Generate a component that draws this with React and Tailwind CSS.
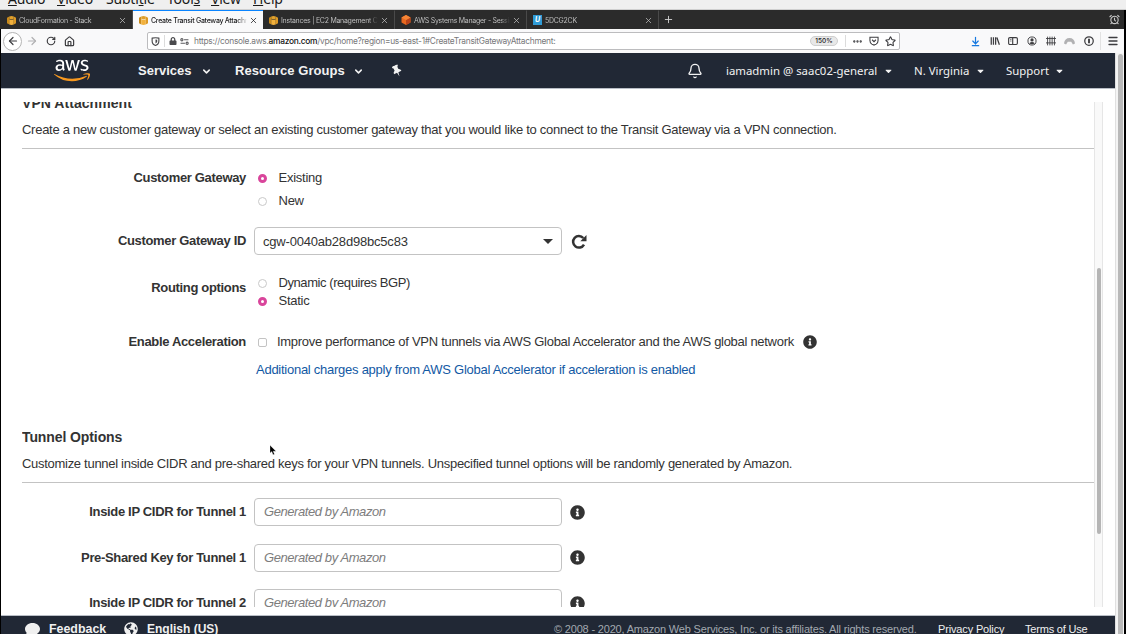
import React from 'react';
import {
  ArrowLeft, ArrowRight, RotateCw, House, X, Plus, ChevronDown, Bell, Star, Ellipsis, Menu,
  AlarmClock, ArrowDownToLine,
} from 'lucide-react';
import {
  FaAws, FaInfoCircle, FaComment, FaGlobeAmericas, FaLock, FaCaretDown,
} from 'react-icons/fa';

const MENUS = [
  ['', 'A', 'udio', 'ml-[8px] w-[49px]'],
  ['', 'V', 'ideo', 'w-[49px]'],
  ['Subti', 't', 'le', 'w-[61px]'],
  ['Tool', 's', '', 'w-[44px]'],
  ['', 'V', 'iew', 'w-[42px]'],
  ['', 'H', 'elp', 'w-[40px]'],
];

function MenuBar() {
  return (
    <div className="h-[10px] shrink-0 overflow-hidden border-b border-[#cfcfcf] bg-[#efefef] font-['Noto_Sans',sans-serif] text-[14px] leading-[20px] text-[#1a1a1a]">
      <div className="-mt-[11px] flex whitespace-nowrap tracking-[-0.2px]">
        {MENUS.map(([a, u, b, cls]) => (
          <span key={a + u + b} className={cls}>
            {a}
            <span className="underline decoration-1 underline-offset-1">{u}</span>
            {b}
          </span>
        ))}
      </div>
    </div>
  );
}

function Cube({ red }) {
  return red ? (
    <svg viewBox="0 0 20 20" className="h-[10px] w-[10px] shrink-0">
      <path d="M10 0l9 5v10l-9 5-9-5V5z" fill="#e8681f" />
      <path d="M10 10l9-5v10l-9 5z" fill="#b8431a" />
      <path d="M10 0l9 5-9 5-9-5z" fill="#f58536" />
    </svg>
  ) : (
    <svg viewBox="0 0 20 20" className="h-[9px] w-[9px] shrink-0">
      <path d="M0 4l5-3v18l-5-3z" fill="#c98a1b" />
      <path d="M5 1l5-1 5 1v5l-5 2-5-2z" fill="#e0a02b" />
      <path d="M5 7l5 2v11l-5-1zM15 7l-5 2v11l5-1z" fill="#f2b13d" />
      <path d="M20 4l-5-3v18l5-3z" fill="#dd9a26" />
    </svg>
  );
}

function Tab({ icon, title, active, width }) {
  return (
    <div
      className={`flex ${width} items-center border-t pl-[6px] pr-[5px] ${
        active ? 'border-t-[#0a84ff] bg-[#f9f9fa] font-medium text-[#1b1b1d]' : 'border-r border-t-[#2b2b2b] border-r-[#4a4a4a] bg-[#2b2b2b] text-[#bdbdbd]'
      }`}
    >
      {icon}
      <span className="ml-[3px] min-w-0 flex-1 overflow-hidden whitespace-nowrap pt-px text-[7px] leading-[12px] tracking-[-0.27px] [mask-image:linear-gradient(to_right,black_90%,transparent)]">
        {title}
      </span>
      <X className="ml-[2px] h-[9px] w-[9px] shrink-0" strokeWidth={2} />
    </div>
  );
}

function TabStrip() {
  return (
    <div className="flex h-[19px] shrink-0 bg-[#2b2b2b] pl-px font-['Inter',sans-serif]">
      <Tab width="w-[132px]" icon={<Cube />} title="CloudFormation - Stack" />
      <Tab width="w-[130px]" active icon={<Cube />} title="Create Transit Gateway Attachm" />
      <Tab width="w-[132px]" icon={<Cube />} title="Instances | EC2 Management C" />
      <Tab width="w-[132px]" icon={<Cube red />} title="AWS Systems Manager - Sessio" />
      <Tab
        width="w-[132px]"
        icon={<span className="flex h-[10px] w-[9px] shrink-0 items-center justify-center bg-[#2f9bd6] text-[7px] font-bold italic text-white">U</span>}
        title="5DCG2CK"
      />
      <div className="flex items-center pl-[4px] text-[#d0d0d0]">
        <Plus className="h-[11px] w-[11px]" strokeWidth={2} />
      </div>
      <div className="ml-auto mr-[4px] flex items-center text-[#c8c8c8]">
        <AlarmClock className="h-[11px] w-[11px]" strokeWidth={2.4} />
      </div>
      <div className="w-[2px] bg-black" />
    </div>
  );
}

function ToolBar() {
  return (
    <div className="flex h-[24px] shrink-0 items-center border-x border-x-black border-r-2 bg-[#f9f9fa] font-['Inter',sans-serif] text-[#3d3d40]">
      <div className="ml-[2px] flex h-[19px] w-[19px] shrink-0 items-center justify-center rounded-full border border-[#b5b5b5] bg-white">
        <ArrowLeft className="h-[12px] w-[12px]" strokeWidth={2.4} />
      </div>
      <ArrowRight className="ml-[4px] h-[12px] w-[12px] text-[#b0b0b2]" strokeWidth={2.4} />
      <RotateCw className="ml-[8px] h-[10px] w-[10px]" strokeWidth={2.8} />
      <House className="ml-[8px] h-[11px] w-[11px]" strokeWidth={2.6} />
      <div className="ml-[72px] flex h-[18px] w-[753px] items-center rounded-[2px] border border-[#bcbcbe] bg-white">
        <svg viewBox="0 0 16 16" className="ml-[3px] h-[9px] w-[9px]" fill="none" stroke="#4a4a4d" strokeWidth="2">
          <path d="M2 2q6-1.500 12 0v5q0 6-6 8-6-2-6-8z" />
          <path d="M8 4.500v7q2.500-1 3-4V5z" fill="#4a4a4d" stroke="none" />
        </svg>
        <div className="ml-[4px] h-[12px] w-px bg-[#dcdcdc]" />
        <FaLock className="ml-[4px] h-[8px] w-[8px] text-[#4a4a4d]" />
        <svg viewBox="0 0 20 16" className="ml-[3px] h-[7px] w-[9px]" fill="none" stroke="#5a5a5d" strokeWidth="2.500">
          <circle cx="4" cy="4" r="2.500" />
          <path d="M9 4h10M1 12h10" />
          <circle cx="16" cy="12" r="2.500" />
        </svg>
        <div className="ml-[5px] whitespace-nowrap text-[8.400px] leading-[14px] tracking-[-0.28px] text-[#77777a]">
          https://console.aws.<span className="font-medium text-[#111]">amazon.com</span>/vpc/home?region=us-east-1#CreateTransitGatewayAttachment:
        </div>
        <div className="ml-auto flex h-[10px] w-[28px] items-center justify-center rounded-full border border-[#cfcfcf] bg-[#e8e8e8] pt-px text-[6.500px] font-medium text-[#222]">150%</div>
        <div className="ml-[7px] h-[12px] w-px bg-[#dcdcdc]" />
        <Ellipsis className="ml-[6px] h-[11px] w-[11px]" strokeWidth={3} />
        <svg viewBox="0 0 16 16" className="ml-[6px] h-[10px] w-[10px]" fill="none" stroke="currentColor" strokeWidth="1.700">
          <path d="M1.500 2h13v5q0 4-3 6l-3.500 1.500L4.500 13q-3-2-3-6z" />
          <path d="M5 6l3 3 3-3" />
        </svg>
        <Star className="ml-[6px] mr-[3px] h-[11px] w-[11px]" strokeWidth={2.4} />
      </div>
      <div className="ml-auto flex items-center gap-[8.700px]">
        <ArrowDownToLine className="h-[11px] w-[11px] text-[#1679e0]" strokeWidth={2.6} />
        <svg viewBox="0 0 16 16" className="h-[10px] w-[10px]" stroke="currentColor" strokeWidth="2">
          <path d="M2 2v12M5.500 2v12M9 2v12M11 2.500l4 11.500" />
        </svg>
        <svg viewBox="0 0 16 16" className="h-[10px] w-[10px]" fill="none" stroke="currentColor" strokeWidth="1.800">
          <rect x="1" y="2.500" width="14" height="11" rx="2" />
          <path d="M7.500 2.500v11" />
          <path d="M3.500 5.500h2M3.500 8h2" strokeWidth="1.200" />
        </svg>
        <svg viewBox="0 0 16 16" className="h-[10px] w-[10px]">
          <circle cx="8" cy="8" r="6.500" fill="none" stroke="currentColor" strokeWidth="1.500" />
          <circle cx="8" cy="6.300" r="2.600" fill="currentColor" />
          <path d="M3.500 11.500q4.500-3.500 9 0-4.500 3.500-9 0z" fill="currentColor" />
        </svg>
        <svg viewBox="0 0 16 16" className="h-[10px] w-[10px]" stroke="currentColor" strokeWidth="1.400">
          <path d="M2.500 1v14M6.200 1v14M9.800 1v14M13.500 1v14M0 4h16M0 11h16" />
        </svg>
        <svg viewBox="0 0 16 16" className="h-[11px] w-[11px]" fill="#b1b1b3">
          <path d="M0 11Q1 3 8 3t8 8l-3 1.500-2.500-4H5.500L3 12.500z" />
        </svg>
        <svg viewBox="0 0 16 16" className="h-[10px] w-[10px]" fill="none" stroke="currentColor" strokeWidth="2">
          <circle cx="8" cy="8" r="6.800" />
          <path d="M8 4.500v7" strokeWidth="3" />
        </svg>
      </div>
      <div className="ml-[6px] h-[18px] w-px bg-[#e2e2e2]" />
      <Menu className="ml-[6px] mr-[5px] h-[12px] w-[12px]" strokeWidth={2.6} />
    </div>
  );
}

function AwsHeader() {
  return (
    <div className="flex h-[36px] shrink-0 items-center border-b border-[#b9bec6] bg-[#212835] pt-px text-[#f2f2f2]">
      <svg className="absolute h-0 w-0">
        <defs>
          <linearGradient id="smile" gradientUnits="userSpaceOnUse" x1="0" y1="0" x2="0" y2="512">
            <stop offset="0.6" stopColor="#fff" />
            <stop offset="0.6" stopColor="#f7981f" />
          </linearGradient>
        </defs>
      </svg>
      <FaAws fill="url(#smile)" className="-mt-[2px] ml-[53px] h-[29px] w-[36px]" />
      <span className="ml-[48px] w-[54px] whitespace-nowrap text-[13px] font-bold">Services</span>
      <ChevronDown className="ml-[9px] mt-px h-[11px] w-[11px]" strokeWidth={3.4} />
      <span className="ml-[23px] w-[110px] whitespace-nowrap text-[13px] font-bold tracking-[0.05px]">Resource Groups</span>
      <ChevronDown className="ml-[8px] mt-px h-[11px] w-[11px]" strokeWidth={3.4} />
      <svg viewBox="0 0 16 16" className="ml-[27px] h-[12px] w-[12px] -rotate-[25deg]" fill="currentColor">
        <path d="M4 0h8v2.200L10.800 3v3.500q2.700 1 2.700 3.700H9L8 16 7 10.200H2.500q0-2.700 2.700-3.700V3L4 2.200z" />
      </svg>
      <Bell className="ml-[284px] h-[16px] w-[16px]" strokeWidth={2} />
      <div className="ml-[23px] flex items-center whitespace-nowrap font-['Noto_Sans',sans-serif] text-[11.400px]">
        <span className="w-[152px]">iamadmin @ saac02-general</span>
        <FaCaretDown className="ml-[6px] h-[10px] w-[9px]" />
        <span className="ml-[21px] w-[56px]">N. Virginia</span>
        <FaCaretDown className="ml-[6px] h-[10px] w-[9px]" />
        <span className="ml-[21px] w-[43px]">Support</span>
        <FaCaretDown className="ml-[6px] h-[10px] w-[9px]" />
      </div>
    </div>
  );
}

function Row({ label, className = '', children }) {
  return (
    <div className={`flex items-center ${className}`}>
      <div className="w-[224px] shrink-0 whitespace-nowrap text-right font-bold tracking-[-0.33px]">{label}</div>
      {children}
    </div>
  );
}

function Radio({ on, label, className = '', labelClass = 'tracking-[-0.25px]' }) {
  return (
    <div className={`flex items-center pl-[12px] ${className}`}>
      <span className={`h-[9px] w-[9px] shrink-0 rounded-full ${on ? 'border-[3px] border-[#d9459b] bg-white' : 'border border-[#c9c9c9] bg-white'}`} />
      <span className={`ml-[11.5px] whitespace-nowrap ${labelClass}`}>{label}</span>
    </div>
  );
}

function Section({ title, text, className, titleClass, textClass }) {
  return (
    <div className={`border-b border-[#c3c3c3] pb-[8px] ${className}`}>
      <h2 className={`text-[14px] font-bold leading-[20px] ${titleClass}`}>{title}</h2>
      <p className={`mt-[7px] whitespace-nowrap ${textClass}`}>{text}</p>
    </div>
  );
}

function TunnelField({ label, className }) {
  return (
    <Row label={label} className={className}>
      <div className="ml-[8px] flex h-[28px] w-[308px] items-center rounded-[4px] border border-[#c3c3c3] pl-[9px] italic tracking-[-0.42px] text-[#7d7d7d]">
        Generated by Amazon
      </div>
      <FaInfoCircle className="ml-[8px] h-[15px] w-[15px] text-[#333]" />
    </Row>
  );
}

function Content() {
  return (
    <div className="flex min-h-0 flex-1 bg-white pb-[8px] pl-[21px] pt-[13px]">
      <div className="w-[1072px] overflow-hidden text-[13px] leading-[20px] text-[#333]">
        <Section
          className="-mt-[9px]"
          titleClass="tracking-[0.05px]"
          textClass="tracking-[-0.27px]"
          title="VPN Attachment"
          text="Create a new customer gateway or select an existing customer gateway that you would like to connect to the Transit Gateway via a VPN connection."
        />
        <div className="flex pt-[19px]">
          <Row label="Customer Gateway" className="h-[20px]" />
          <div>
            <Radio on label="Existing" />
            <Radio label="New" className="mt-[3px]" />
          </div>
        </div>
        <Row label="Customer Gateway ID" className="mt-[16px]">
          <div className="ml-[8px] flex h-[28px] w-[308px] items-center justify-between rounded-[4px] border border-[#c3c3c3] pl-[8px] pr-[8px]">
            <span className="pt-px tracking-[-0.2px]">cgw-0040ab28d98bc5c83</span>
            <span className="h-0 w-0 border-x-[5.500px] border-t-[5.500px] border-x-transparent border-t-[#333]" />
          </div>
          <svg viewBox="0 0 16 16" className="ml-[9px] mt-px h-[16px] w-[16px]">
            <path d="M13 10.600A5.800 5.800 0 1 1 12.300 4" fill="none" stroke="currentColor" strokeWidth="2.500" />
            <path d="M15.500 1v6.200H9.300z" fill="currentColor" />
          </svg>
        </Row>
        <div className="mt-[19px] flex">
          <Row label="Routing options" className="mt-[4px] h-[20px]" />
          <div>
            <Radio label="Dynamic (requires BGP)" className="h-[18px]" labelClass="tracking-[-0.43px]" />
            <Radio on label="Static" className="h-[18px]" />
          </div>
        </div>
        <Row label="Enable Acceleration" className="mt-[22px] h-[20px]">
          <span className="ml-[12px] h-[9px] w-[9px] shrink-0 rounded-[2px] border border-[#c3c3c3]" />
          <span className="ml-[10px] whitespace-nowrap tracking-[-0.29px]">Improve performance of VPN tunnels via AWS Global Accelerator and the AWS global network</span>
          <FaInfoCircle className="ml-[9px] h-[14px] w-[14px]" />
        </Row>
        <div className="mt-[8px] whitespace-nowrap pl-[234px] tracking-[-0.26px] text-[#1259a4]">
          Additional charges apply from AWS Global Accelerator if acceleration is enabled
        </div>
        <Section
          className="mt-[47px]"
          titleClass="tracking-[-0.1px]"
          textClass="tracking-[-0.29px]"
          title="Tunnel Options"
          text="Customize tunnel inside CIDR and pre-shared keys for your VPN tunnels. Unspecified tunnel options will be randomly generated by Amazon."
        />
        <TunnelField label="Inside IP CIDR for Tunnel 1" className="mt-[15px]" />
        <TunnelField label="Pre-Shared Key for Tunnel 1" className="mt-[17.5px]" />
        <TunnelField label="Inside IP CIDR for Tunnel 2" className="mt-[17.5px]" />
      </div>
      <div className="w-[9px] border-x border-[#e6e6e6] bg-[#f9f9f9] pl-[1.5px] pt-[166px]">
        <div className="h-[266px] w-[4.5px] rounded-full bg-[#b5b5b5]" />
      </div>
    </div>
  );
}

function Footer() {
  return (
    <div className="h-[19px] shrink-0 overflow-hidden border-t border-[#b9bec6] bg-[#212835]">
      <div className="flex h-[26px] items-center whitespace-nowrap text-[#f0f0f0]">
        <FaComment className="ml-[24px] h-[15px] w-[15px]" />
        <span className="ml-[9px] w-[58px] text-[12.400px] font-bold">Feedback</span>
        <FaGlobeAmericas className="ml-[17px] h-[14px] w-[14px]" />
        <span className="ml-[9px] w-[71px] text-[12px] font-bold">English (US)</span>
        <span className="ml-[336px] w-[363px] text-[11px] tracking-[-0.18px] text-[#a3a8b0]">© 2008 - 2020, Amazon Web Services, Inc. or its affiliates. All rights reserved.</span>
        <span className="ml-[21px] w-[67px] text-[11px] tracking-[-0.15px]">Privacy Policy</span>
        <span className="ml-[20px] text-[11px] tracking-[-0.2px]">Terms of Use</span>
      </div>
    </div>
  );
}

export default function App() {
  return (
    <div className="flex h-[634px] w-[1126px] flex-col overflow-hidden bg-white font-['Liberation_Sans',Arial,sans-serif]">
      <MenuBar />
      <TabStrip />
      <ToolBar />
      <div className="flex min-h-0 flex-1 border-l border-r-2 border-black">
        <div className="flex w-[1114px] flex-col">
          <AwsHeader />
          <Content />
          <Footer />
        </div>
        <div className="w-[9px] border-l border-[#e0e0e0] bg-[#f4f4f4] pl-[2px] pt-px">
          <div className="h-full w-[5px] rounded-t-full bg-[#b9b9b9]" />
        </div>
      </div>
      <svg viewBox="0 0 10 16" className="absolute left-[270px] top-[445px] h-[10px] w-[6px]">
        <path d="M0 0v13l3-2.500L5 16l2.500-1-2.200-5H10z" fill="#000" stroke="#fff" strokeWidth="0.500" />
      </svg>
    </div>
  );
}
